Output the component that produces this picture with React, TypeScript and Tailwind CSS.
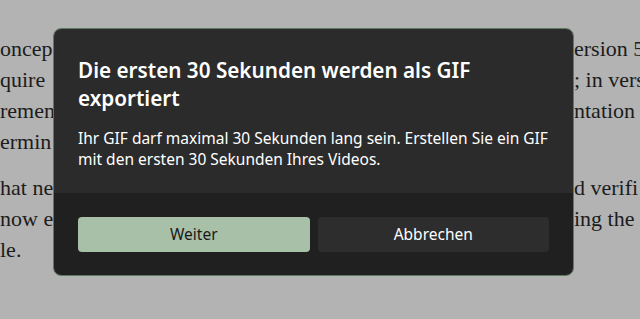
import React from "react";

// page text behind the dimmed overlay: only the ends of each line show
const para1 = [
  { left: "oncep", right: "ersion 5" },
  { left: "quire", right: "; in vers" },
  { left: "remen", right: "ntation" },
  { left: "ermin", right: "" },
];

const para2 = [
  { left: "hat ne", right: "d verifi" },
  { left: "now e", right: "ing the" },
  { left: "le.", right: "" },
];

function Line({ left, right }: { left: string; right: string }) {
  return (
    <div className="grid grid-cols-[53px_521px_66px] whitespace-nowrap">
      <span className="overflow-hidden">{left}</span>
      <span />
      <span className="overflow-hidden">{right}</span>
    </div>
  );
}

function Backdrop() {
  return (
    <div className="absolute inset-0 text-[22px] leading-[31px] text-[#1c1c1c] font-['Liberation_Serif',serif]">
      <div className="mt-[33px]">
        {para1.map((l, i) => (
          <Line key={i} {...l} />
        ))}
      </div>
      <div className="mt-[15px]">
        {para2.map((l, i) => (
          <Line key={i} {...l} />
        ))}
      </div>
    </div>
  );
}

export default function App() {
  return (
    <div className="relative w-[640px] h-[319px] overflow-hidden bg-[#b3b3b3]">
      <Backdrop />

      {/* Dialog */}
      <div className="absolute left-[53px] top-[28px] w-[521px] rounded-lg border border-[#5e7a5e] overflow-hidden font-['Noto_Sans',sans-serif]">
        <div className="h-[164px] bg-[#2b2b2b] px-6 pt-[27px]">
          <h1 className="text-[20.7px] leading-[28px] font-semibold text-white">
            Die ersten 30 Sekunden werden als GIF exportiert
          </h1>
          <p className="mt-[16px] text-[15.5px] leading-[21px] text-white">
            Ihr GIF darf maximal 30 Sekunden lang sein. Erstellen Sie ein GIF mit den ersten 30 Sekunden Ihres Videos.
          </p>
        </div>
        <div className="bg-[#202020] px-6 pt-6 pb-[23px] grid grid-cols-2 gap-2">
          <button className="h-[35px] rounded bg-[#a8bfa8] text-[15.5px] text-[#1a1a1a]">Weiter</button>
          <button className="h-[35px] rounded bg-[#2d2d2d] text-[15.5px] text-white">Abbrechen</button>
        </div>
      </div>
    </div>
  );
}
